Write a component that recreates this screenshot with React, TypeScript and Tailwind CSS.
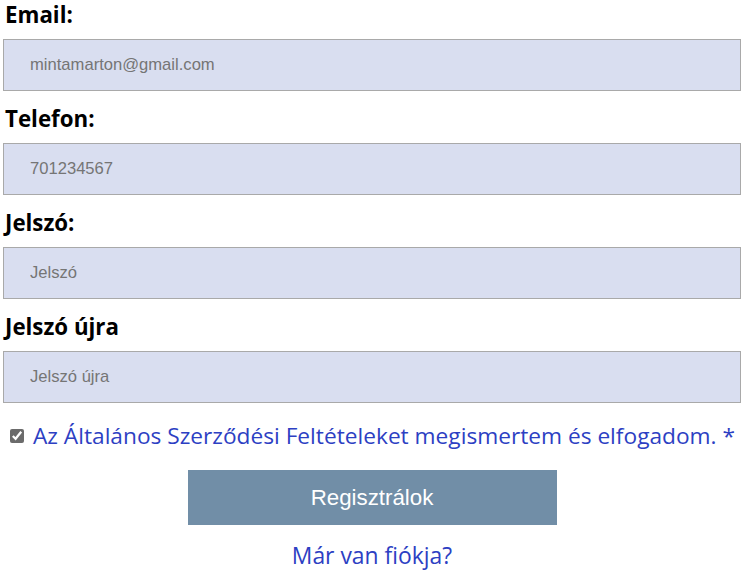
import React, { useState } from 'react';

const fields = [
  { label: 'Email:', type: 'email', value: 'mintamarton@gmail.com', placeholder: 'Email' },
  { label: 'Telefon:', type: 'tel', value: '701234567', placeholder: 'Telefon' },
  { label: 'Jelszó:', type: 'password', value: '', placeholder: 'Jelszó' },
  { label: 'Jelszó újra', type: 'password', value: '', placeholder: 'Jelszó újra' },
];

export default function App() {
  const [accepted, setAccepted] = useState(true);

  return (
    <div className="w-[746px] h-[577px] bg-white overflow-hidden font-['Open_Sans',sans-serif]">
      <form className="flex flex-col pl-[3px] pr-[5px]" onSubmit={(e) => e.preventDefault()}>
        {fields.map((f) => (
          <div key={f.label} className="flex flex-col mb-[13px]">
            <label className="h-[39px] pl-[2px] text-[22.3px] leading-[30px] font-bold text-black">{f.label}</label>
            <input
              type={f.type === 'password' ? 'text' : f.type}
              defaultValue={f.value}
              placeholder={f.placeholder}
              className="h-[52px] w-full bg-[#d9def0] border border-[#a9a9a9] pl-[26px] text-[16.6px] text-[#757575] placeholder:text-[#757575] font-['Liberation_Sans',Arial,sans-serif] outline-none"
            />
          </div>
        ))}

        {/* Terms */}
        <label className="flex items-center gap-[9px] pl-[7px] mt-[-2px] h-[44px] cursor-pointer">
          <input
            type="checkbox"
            checked={accepted}
            onChange={(e) => setAccepted(e.target.checked)}
            className="w-[14px] h-[14px] accent-[#6b6b6b]"
          />
          <span className="text-[22.7px] text-[#2d3fc3] whitespace-nowrap">
            Az Általános Szerződési Feltételeket megismertem és elfogadom. *
          </span>
        </label>

        <div className="flex flex-col items-center mt-[12px]">
          <button
            type="submit"
            className="w-[369px] h-[55px] bg-[#718ea7] text-white text-[22.3px] font-['Liberation_Sans',Arial,sans-serif]"
          >
            Regisztrálok
          </button>
          <a href="#" className="mt-[16px] text-[22.9px] leading-[30px] text-[#2d3fc3]">
            Már van fiókja?
          </a>
        </div>
      </form>
    </div>
  );
}
